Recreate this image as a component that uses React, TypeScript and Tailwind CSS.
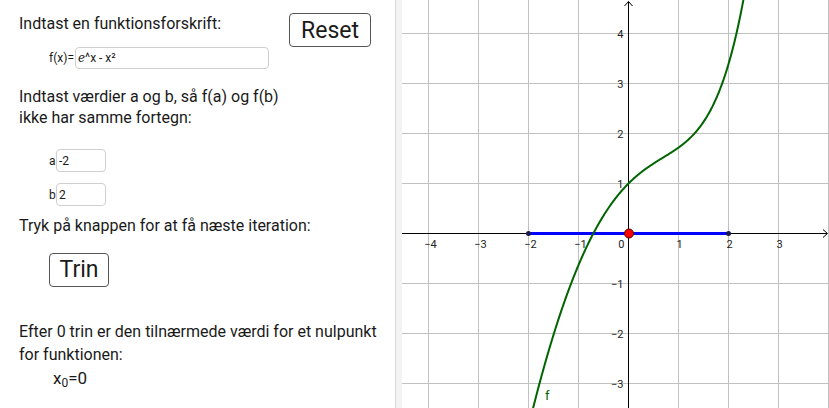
import React from "react";

const OX = 226.5;
const OY = 233.5;
const S = 50;

function curvePath() {
  const pts: string[] = [];
  for (let x = -1.95; x <= 2.35; x += 0.01) {
    const y = Math.exp(x) - x * x;
    const px = OX + x * S;
    const py = OY - y * S;
    pts.push(`${pts.length ? "L" : "M"}${px.toFixed(2)} ${py.toFixed(2)}`);
  }
  return pts.join(" ");
}

function Graph() {
  const xs = [-4, -3, -2, -1, 1, 2, 3, 4];
  const ys = [-3, -2, -1, 1, 2, 3, 4];
  const minus = "\u2212";

  return (
    <svg width="427" height="408" viewBox="0 0 427 408" className="block shrink-0 bg-white">
      {/* grid */}
      {xs.map((k) => (
        <line key={`gx${k}`} x1={OX + k * S} y1={0} x2={OX + k * S} y2={408} stroke="#c0c0c0" strokeWidth={1} />
      ))}
      {ys.map((k) => (
        <line key={`gy${k}`} x1={0} y1={OY - k * S} x2={427} y2={OY - k * S} stroke="#c0c0c0" strokeWidth={1} />
      ))}

      {/* axes */}
      <line x1={0} y1={OY} x2={425} y2={OY} stroke="#000" strokeWidth={1} />
      <path d={`M${421} ${OY - 4} L${425.5} ${OY} L${421} ${OY + 4}`} fill="none" stroke="#000" strokeWidth={1} />
      <line x1={OX} y1={1.5} x2={OX} y2={408} stroke="#000" strokeWidth={1} />
      <path d={`M${OX - 4} ${6} L${OX} ${1.5} L${OX + 4} ${6}`} fill="none" stroke="#000" strokeWidth={1} />

      {/* labels */}
      <g fontFamily="Roboto, 'Liberation Sans', sans-serif" fontSize="11" fill="#222">
        {[-4, -3, -2, -1, 1, 2, 3].map((k) => (
          <text key={`lx${k}`} x={OX + k * S + (k < 0 ? 2 : 1)} y={OY + 14} textAnchor="middle">
            {k < 0 ? `${minus}${-k}` : k}
          </text>
        ))}
        <text x={OX - 4} y={OY + 14} textAnchor="end">0</text>
        {ys.map((k) => (
          <text key={`ly${k}`} x={OX - 5} y={OY - k * S + 4} textAnchor="end">
            {k < 0 ? `${minus}${-k}` : k}
          </text>
        ))}
      </g>

      {/* interval [a, b] */}
      <line x1={OX - 2 * S} y1={OY} x2={OX + 2 * S} y2={OY} stroke="#0000ff" strokeWidth={3} />
      <circle cx={OX - 2 * S} cy={OY} r={2.5} fill="#1a1a4d" />
      <circle cx={OX + 2 * S} cy={OY} r={2.5} fill="#1a1a4d" />

      {/* f */}
      <path d={curvePath()} fill="none" stroke="#006400" strokeWidth={2} />
      <text x={143} y={400} fontFamily="Roboto, 'Liberation Sans', sans-serif" fontSize="13" fill="#006400">f</text>

      {/* x0 */}
      <circle cx={OX + 0.5} cy={OY} r={4.5} fill="#ff0000" stroke="#550000" strokeWidth={1} />
    </svg>
  );
}

export default function App() {
  return (
    <div
      className="flex w-[829px] h-[408px] overflow-hidden bg-white text-[#1a1a1a]"
      style={{ fontFamily: "Roboto, 'Liberation Sans', Arial, sans-serif" }}
    >
      {/* control panel */}
      <div className="w-[395px] shrink-0 pl-[19px] pt-[13px]">
        <div className="flex items-start h-[34px]">
          <div className="w-[270px] text-[16px] leading-[20px] pt-[1px]">Indtast en funktionsforskrift:</div>
          <button className="w-[82px] h-[34px] border border-[#555] rounded-[4px] bg-white text-[23px] leading-none">
            Reset
          </button>
        </div>

        <div className="flex items-center ml-[30px] h-[22px] text-[12px]">
          <span className="w-[26px]">f(x)=</span>
          <div className="w-[194px] h-[22px] border border-[#cfcfcf] rounded-[4px] flex items-center px-[2px]">
            <span className="italic" style={{ fontFamily: "'DejaVu Serif', serif" }}>e</span>
            <span>^x - x²</span>
          </div>
        </div>

        <div className="mt-[18px] text-[16px] leading-[20.5px]">
          <div>Indtast værdier a og b, så f(a) og f(b)</div>
          <div>ikke har samme fortegn:</div>
        </div>

        <div className="flex items-center ml-[30px] mt-[21px] h-[23px] text-[12px]">
          <span className="w-[7px]">a</span>
          <div className="w-[50px] h-[23px] border border-[#cfcfcf] rounded-[4px] flex items-center px-[2px]">-2</div>
        </div>
        <div className="flex items-center ml-[30px] mt-[11px] h-[23px] text-[12px]">
          <span className="w-[7px]">b</span>
          <div className="w-[50px] h-[23px] border border-[#cfcfcf] rounded-[4px] flex items-center px-[2px]">2</div>
        </div>

        <div className="mt-[10px] text-[16px] leading-[20.5px]">Tryk på knappen for at få næste iteration:</div>

        <button className="mt-[16px] ml-[30px] w-[60px] h-[34px] border border-[#555] rounded-[4px] bg-white text-[23px] leading-none">
          Trin
        </button>

        <div className="mt-[33px] text-[16px] leading-[23px]">
          <div>Efter 0 trin er den tilnærmede værdi for et nulpunkt</div>
          <div>for funktionen:</div>
        </div>
        <div className="ml-[34px] mt-[2px] text-[17px] leading-[20px]">
          x<sub className="text-[12px]">0</sub>=0
        </div>
      </div>

      {/* splitter */}
      <div className="w-[7px] shrink-0 bg-[#f3f3f3] border-l border-[#d9d9d9]" />

      <Graph />
    </div>
  );
}
